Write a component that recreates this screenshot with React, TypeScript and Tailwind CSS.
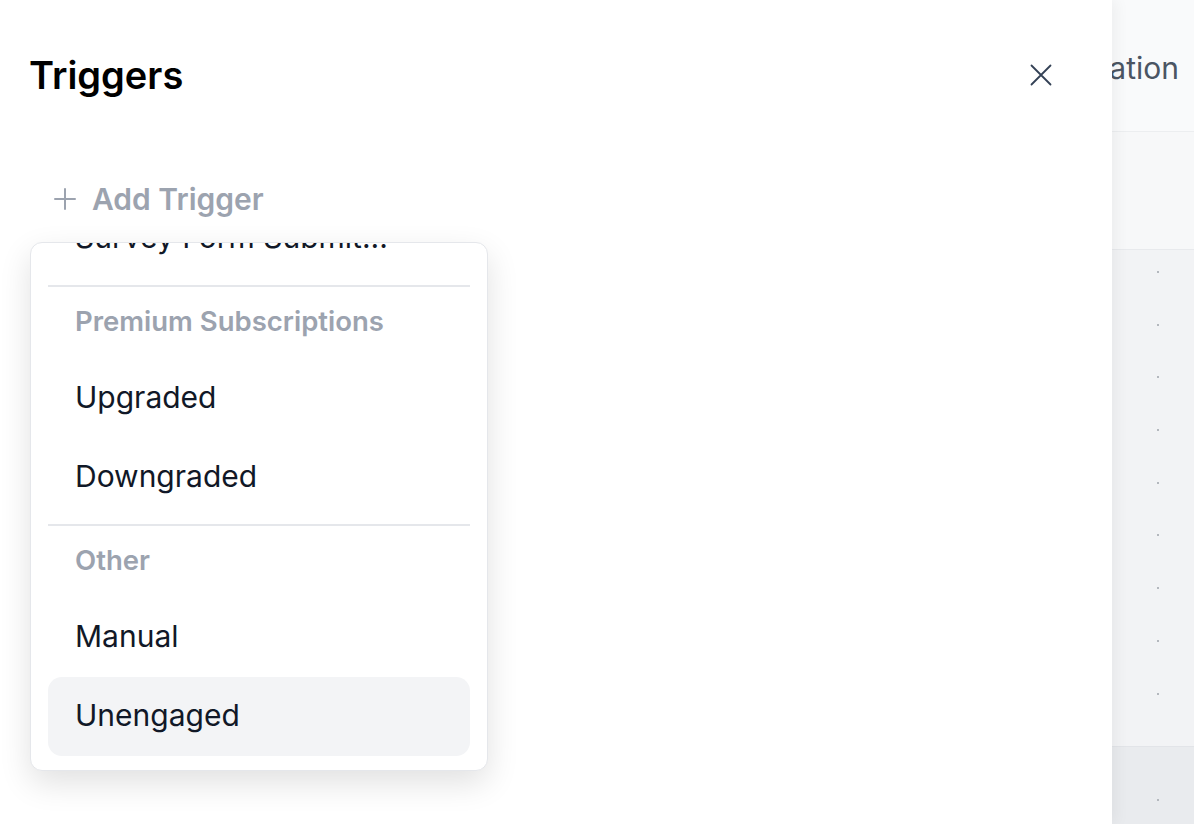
import React from "react";

const sections = [
  { label: "Premium Subscriptions", items: ["Upgraded", "Downgraded"] },
  { label: "Other", items: ["Manual", "Unengaged"] },
];

const CloseIcon = () => (
  <svg width="22" height="22" viewBox="0 0 22 22" fill="none" stroke="#334155" strokeWidth="1.8" strokeLinecap="round">
    <path d="M1.5 1.5l19 19M20.5 1.5l-19 19" />
  </svg>
);

const PlusIcon = () => (
  <svg width="22" height="22" viewBox="0 0 22 22" fill="none" stroke="#9ca3af" strokeWidth="2" strokeLinecap="round">
    <path d="M11 1v20M1 11h20" />
  </svg>
);

const MenuItem = ({ label, active = false }: { label: string; active?: boolean }) => (
  <div
    className={
      active
        ? "flex h-[79px] items-center rounded-[14px] bg-[#f3f4f6] pb-[2px] pl-[27px] text-[30px] text-[#111827]"
        : "flex h-[79px] items-center rounded-[14px] pb-[2px] pl-[27px] text-[30px] text-[#111827]"
    }
  >
    {label}
  </div>
);

export default function App() {
  return (
    <div className="relative h-[824px] w-full overflow-hidden bg-[#f2f3f5] font-['Inter',sans-serif]">
      {/* page behind the drawer */}
      <div className="flex h-[132px] items-center justify-end border-b border-[#eceef0] bg-[#f9fafb] pr-[15px]">
        <span className="mt-[6px] text-[30px] text-[#4b5563]">Automation</span>
      </div>
      <div className="h-[118px] border-b border-[#e8eaed] bg-[#f7f8f9]" />
      <div className="flex h-[496px] justify-end pr-[35px]">
        <div className="flex shrink-0 flex-col pt-[21px]">
          {Array.from({ length: 9 }).map((_, i) => (
            <div key={i} className="h-[52.7px] shrink-0">
              <div className="h-[2px] w-[2px] bg-[#b4b8be]" />
            </div>
          ))}
        </div>
      </div>
      <div className="flex h-[80px] justify-end border-t border-[#e2e4e8] bg-[#e9ebee] pr-[35px] pt-[52px]">
        <div className="h-[2px] w-[2px] bg-[#b4b8be]" />
      </div>

      {/* drawer */}
      <div className="absolute inset-y-0 left-0 w-[1112px] bg-white shadow-[4px_0_14px_rgba(0,0,0,0.05)]">
        <div className="flex h-[150px] items-center justify-between pl-[29px] pr-[60px]">
          <h1 className="text-[38px] font-semibold text-black">Triggers</h1>
          <button className="flex h-[22px] w-[22px] items-center justify-center">
            <CloseIcon />
          </button>
        </div>

        <div className="flex h-[92px] items-center pl-[54px] pt-[6px]">
          <button className="flex items-center gap-[16px] text-[30px] font-semibold text-[#9ca3af]">
            <PlusIcon />
            <span>Add Trigger</span>
          </button>
        </div>

        <div className="ml-[30px] h-[529px] w-[458px] overflow-hidden rounded-[12px] border border-[#e5e7eb] bg-white shadow-[0_12px_32px_rgba(0,0,0,0.12)]">
          <div className="-mt-[44px] px-[17px]">
            <MenuItem label="Survey Form Submit..." />
            {sections.map((s) => (
              <div key={s.label}>
                <div className="my-[7px] h-[2px] bg-[#e5e7eb]" />
                <div className="mb-[9px] flex h-[56px] items-center pl-[27px] text-[27.5px] font-semibold text-[#9ca3af]">
                  {s.label}
                </div>
                {s.items.map((it) => (
                  <MenuItem key={it} label={it} active={it === "Unengaged"} />
                ))}
              </div>
            ))}
          </div>
        </div>
      </div>
    </div>
  );
}
